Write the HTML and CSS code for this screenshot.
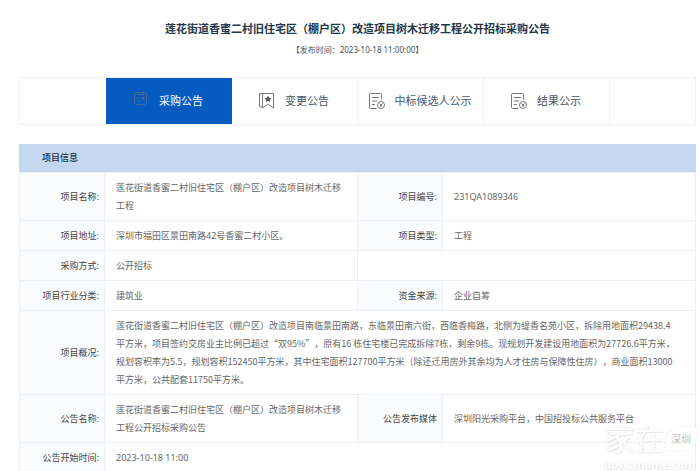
FILE: index.html
```html
<!DOCTYPE html>
<html lang="zh-CN">
<head>
<meta charset="utf-8">
<meta name="viewport" content="width=device-width, initial-scale=1">
<title>莲花街道香蜜二村旧住宅区（棚户区）改造项目树木迁移工程公开招标采购公告</title>
<link rel="stylesheet" href="styles.css">
</head>
<body>
<main class="page">
  <header class="heading">
    <h1 class="title">莲花街道香蜜二村旧住宅区（棚户区）改造项目树木迁移工程公开招标采购公告</h1>
    <p class="date">【发布时间：2023-10-18 11:00:00】</p>
  </header>

  <nav class="tabs">
    <a class="tab active" href="#purchase">
      <svg class="icon" viewBox="0 0 16 18" aria-hidden="true">
        <rect x="1.500" y="2.500" width="12" height="12" rx="2"/>
        <path d="M4.500 1.500v3h6v-3M4.500 8h2M4.500 11h2M8.500 7.500h2.500v2.500M11 7.500 8 10.500"/>
      </svg>
      <span>采购公告</span>
    </a>
    <a class="tab" href="#change">
      <svg class="icon" viewBox="0 0 16 18" aria-hidden="true">
        <path d="M3.500 1.500h11v14.500l-5.500-4-5.500 4zM3.500 1.500H.5V14.500L3.500 15.500"/>
        <path class="solid" d="m9 3.500 1.100 2.200 2.400.3-1.700 1.700.4 2.400-2.200-1.100-2.200 1.100.4-2.400-1.700-1.700 2.400-.3z"/>
      </svg>
      <span>变更公告</span>
    </a>
    <a class="tab" href="#candidate">
      <svg class="icon" viewBox="0 0 16 18" aria-hidden="true">
        <path d="M12.500 7.500V2.500a1 1 0 0 0-1-1h-10a1 1 0 0 0-1 1v13a1 1 0 0 0 1 1h6M3 5.500h7M3 9h5M3 12.500h3"/>
        <circle cx="12" cy="13" r="3.500"/>
        <path d="m10.500 11.500 1.500 1.500 1.500-1.500M12 13v2M11 13.500h2"/>
      </svg>
      <span>中标候选人公示</span>
    </a>
    <a class="tab" href="#result">
      <svg class="icon" viewBox="0 0 16 18" aria-hidden="true">
        <path d="M12.500 7.500V2.500a1 1 0 0 0-1-1h-10a1 1 0 0 0-1 1v13a1 1 0 0 0 1 1h6M3 5.500h7M3 9h5M3 12.500h3"/>
        <circle cx="12" cy="13" r="3.500"/>
        <path d="m10.500 11.500 1.500 1.500 1.500-1.500M12 13v2M11 13.500h2"/>
      </svg>
      <span>结果公示</span>
    </a>
  </nav>

  <section>
    <h2 class="section-title">项目信息</h2>
    <table class="info">
      <colgroup><col class="label-col"><col><col class="label-col"><col></colgroup>
      <tbody>
        <tr><th scope="row">项目名称:</th><td>莲花街道香蜜二村旧住宅区（棚户区）改造项目树木迁移工程</td><th scope="row">项目编号:</th><td>231QA1089346</td></tr>
        <tr><th scope="row">项目地址:</th><td>深圳市福田区景田南路42号香蜜二村小区。</td><th scope="row">项目类型:</th><td>工程</td></tr>
        <tr><th scope="row">采购方式:</th><td>公开招标</td><td colspan="2"></td></tr>
        <tr><th scope="row">项目行业分类:</th><td>建筑业</td><th scope="row">资金来源:</th><td>企业自筹</td></tr>
        <tr><th scope="row">项目概况:</th><td class="overview" colspan="3">莲花街道香蜜二村旧住宅区（棚户区）改造项目南临景田南路，东临景田南六街，西临香梅路，北侧为缇香名苑小区，拆除用地面积29438.4<br>平方米，项目签约交房业主比例已超过“双95%”，原有16 栋住宅楼已完成拆除7栋，剩余9栋。现规划开发建设用地面积为27726.6平方米，<br>规划容积率为5.5，规划容积152450平方米，其中住宅面积127700平方米（除还迁用房外其余均为人才住房与保障性住房），商业面积13000<br>平方米，公共配套11750平方米。</td></tr>
        <tr><th scope="row">公告名称:</th><td>莲花街道香蜜二村旧住宅区（棚户区）改造项目树木迁移工程公开招标采购公告</td><th scope="row">公告发布媒体</th><td>深圳阳光采购平台，中国招投标公共服务平台</td></tr>
        <tr><th scope="row">公告开始时间:</th><td colspan="3">2023-10-18 11:00</td></tr>
      </tbody>
    </table>
  </section>
  <div class="watermark">
    <div class="mark-row"><span class="mark-name">家在</span><span class="mark-city">深圳</span></div>
    <div class="mark-url">bbs.szhome.com</div>
  </div>
</main>
</body>
</html>
```
FILE: styles.css
```css
* { box-sizing: border-box; }

body {
  margin: 0;
  background: #fff;
  color: #666;
  font: 9px/18px "Noto Sans", "Noto Sans CJK SC", sans-serif;
  text-spacing-trim: space-all;
}

.page {
  position: relative;
  height: 100vh;
  overflow: hidden;
  padding: 19px 4px 0 19px;
}

.heading { text-align: center; }

.title {
  margin: 0;
  color: #24364a;
  font-size: 11px;
  font-weight: 700;
  line-height: 20px;
}

.date {
  margin: 0;
  color: #45525f;
  font-size: 8px;
  line-height: 21px;
}

.tabs {
  display: flex;
  justify-content: center;
  height: 48px;
  margin: 17px 0 19px;
  border: 1px solid #eff1f4;
}

.tab {
  display: flex;
  flex: 0 0 126px;
  align-items: center;
  justify-content: center;
  gap: 10px;
  border-right: 1px solid #eff1f4;
  color: #46566a;
  font-size: 11px;
  text-decoration: none;
  white-space: nowrap;
}

.active {
  border-color: #055bbf;
  background: #055bbf;
  color: #fff;
}

.icon {
  width: 16px;
  height: 18px;
  fill: none;
  stroke: #777;
  stroke-width: 1;
}

.active .icon {
  margin-bottom: 4px;
  stroke: #4c6a90;
}

.icon .solid { fill: #555; stroke: none; }

.section-title {
  margin: 0;
  padding: 0 23px;
  background: #c4d9f1;
  color: #222f40;
  font-size: 9px;
  font-weight: 500;
  line-height: 28px;
}

.info {
  width: 100%;
  border-collapse: collapse;
  table-layout: fixed;
}

.label-col { width: 85px; }

.info th,
.info td {
  padding: 6px 11px 5px;
  border: 1px solid #eceff3;
  font-weight: 400;
  text-align: left;
}

.info th {
  padding-right: 5px;
  padding-left: 5px;
  background: #f9fbfd;
  color: #444;
  text-align: right;
}

.info .overview { font-family: "Noto Sans CJK SC", sans-serif; }

.watermark {
  position: absolute;
  right: 4px;
  bottom: 0;
  color: #fff;
  text-shadow: 0 0 2px #e2e2e2, 1px 1px 1px #eaeaea;
}

.mark-row {
  display: flex;
  align-items: center;
  gap: 2px;
  margin-bottom: 4px;
}

.mark-name {
  font-size: 30px;
  line-height: 32px;
}

.mark-city {
  padding: 0 5px;
  border-radius: 14px 2px;
  background: #fff;
  box-shadow: 0 0 2px #ddd;
  color: #bbb;
  font-size: 10px;
  line-height: 24px;
  text-shadow: none;
}

.mark-url {
  font-size: 11px;
  font-weight: 700;
  line-height: 12px;
}
```
